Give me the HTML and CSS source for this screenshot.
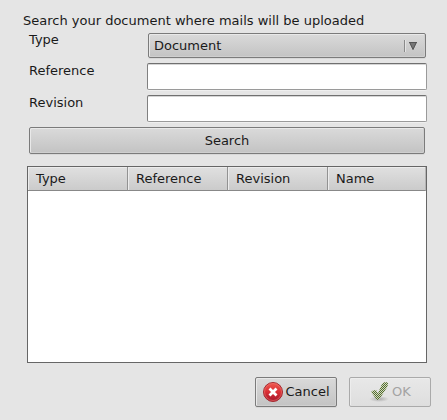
FILE: index.html
```html
<!DOCTYPE html>
<html lang="en">
<head>
<meta charset="utf-8">
<title>Document search</title>
<link rel="stylesheet" href="styles.css">
</head>
<body>
<form class="dialog">
  <p class="intro">Search your document where mails will be uploaded</p>
  <div class="fields">
    <label for="type">Type</label>
    <div class="picker">
      <select id="type"><option>Document</option></select>
      <svg class="arrow" width="20" height="14" viewBox="0 0 20 14" aria-hidden="true">
        <path d="M1.500 1v12" stroke="#8a8a8a"/>
        <path d="M2.500 1v12" stroke="#e4e4e4"/>
        <path d="M6 3h8l-4 8z" fill="#777"/>
        <path d="M6 3.500h8M6.500 3l3.500 7.500 3.500-7.500" fill="none" stroke="#555"/>
      </svg>
    </div>
    <label for="reference">Reference</label>
    <input id="reference" type="text">
    <label for="revision">Revision</label>
    <input id="revision" type="text">
  </div>
  <button class="button search" type="button">Search</button>
  <div class="results">
    <table>
      <thead><tr><th scope="col">Type</th><th scope="col">Reference</th><th scope="col">Revision</th><th scope="col">Name</th></tr></thead>
      <tbody></tbody>
    </table>
  </div>
  <div class="actions">
    <button class="button action" type="button">
      <svg width="22" height="22" viewBox="0 0 22 22" aria-hidden="true">
        <defs>
          <linearGradient id="red" x2="0" y2="1"><stop stop-color="#ef5a50"/><stop offset=".5" stop-color="#d92f35"/><stop offset="1" stop-color="#a3162b"/></linearGradient>
        </defs>
        <circle cx="11" cy="11" r="9.500" fill="url(#red)" stroke="#a52a30"/>
        <circle cx="11" cy="11" r="8.500" fill="none" stroke="#f07a72" stroke-opacity=".55"/>
        <path d="M7.500 7.500l7 7M14.500 7.500l-7 7" stroke="#fff" stroke-width="2.800"/>
      </svg>
      <span>Cancel</span>
    </button>
    <button class="button action" type="button" disabled>
      <svg width="22" height="22" viewBox="0 0 22 22" aria-hidden="true">
        <defs>
          <pattern id="dither" width="2" height="2" patternUnits="userSpaceOnUse"><path d="M0 0h1v1H0zM1 1h1v1H1z" fill="#526a30"/></pattern>
          <radialGradient id="shade"><stop stop-color="#aaa"/><stop offset="1" stop-color="#aaa" stop-opacity="0"/></radialGradient>
        </defs>
        <ellipse cx="10" cy="18" rx="10" ry="3" fill="url(#shade)"/>
        <path d="M2 11l2-1.500 3-.5 2 3.500L12.500 4l2-2.500 2.500-.5 2 1-.5 3.500L10.500 18 8 19z" fill="#d3dbc0"/>
        <path d="M2 11l2-1.500 3-.5 2 3.500L12.500 4l2-2.500 2.500-.5 2 1-.5 3.500L10.500 18 8 19z" fill="url(#dither)"/>
      </svg>
      <span>OK</span>
    </button>
  </div>
</form>
</body>
</html>
```
FILE: styles.css
```css
* {
  box-sizing: border-box;
}

body {
  margin: 0;
  background: #e5e5e5;
  color: #1a1a1a;
  font: 13px/16px "DejaVu Sans", sans-serif;
}

.dialog {
  display: flex;
  flex-direction: column;
  min-height: 100vh;
  padding: 13px 16px 13px 23px;
}

.intro {
  margin: 0 0 3px;
}

.fields {
  display: grid;
  grid-template-columns: 118px 1fr;
  row-gap: 5px;
  margin: 0 4px 0 6px;
}

.picker {
  display: grid;
  align-items: center;
  margin: 1px 1px 0;
}

.picker > * {
  grid-area: 1 / 1;
}

.arrow {
  justify-self: end;
  margin-right: 3px;
  pointer-events: none;
}

select,
input,
.button {
  font: inherit;
  color: inherit;
}

select,
.button {
  border: 1px solid #7b7b7b;
  border-radius: 2px;
  background: linear-gradient(#dadada, #c3c3c3);
  box-shadow: inset 1px 1px #e9e9e9, inset -1px -1px #cfcfcf, 0 1px #d8d8d8;
}

select {
  appearance: none;
  width: 100%;
  height: 25px;
  padding: 0 24px 0 5px;
}

input {
  width: 100%;
  height: 27px;
  padding: 0 5px;
  border: 1px solid #9a9a9a;
  border-top-color: #707070;
  border-left-color: #808080;
  border-radius: 2px;
  background: #fff;
  box-shadow: inset 0 1px #d5d5d5, 0 1px #efefef;
}

.search {
  height: 27px;
  margin: 5px 6px 0;
}

.results {
  flex: 1;
  margin: 12px 4px 14px;
  border: 1px solid #666;
  background: #fff;
}

table {
  width: 100%;
  table-layout: fixed;
  border-collapse: separate;
  border-spacing: 0;
}

th {
  width: 100px;
  height: 24px;
  padding: 0 8px;
  border-right: 1px solid #929292;
  border-bottom: 1px solid #888;
  background: linear-gradient(#e0e0e0, #cbcbcb);
  box-shadow: inset 1px 1px #ececec;
  font-weight: normal;
  text-align: left;
}

th:last-child {
  width: auto;
  border-right-color: #b5b5b5;
}

.actions {
  display: flex;
  justify-content: flex-end;
  gap: 12px;
}

.action {
  display: flex;
  align-items: center;
  justify-content: center;
  gap: 1px;
  width: 82px;
  height: 30px;
  padding: 0;
}

.action:disabled {
  border-color: #aaa;
  background: linear-gradient(#e8e8e8, #dedede);
  box-shadow: inset 1px 1px #ededed;
  color: #a3a3a3;
}
```
